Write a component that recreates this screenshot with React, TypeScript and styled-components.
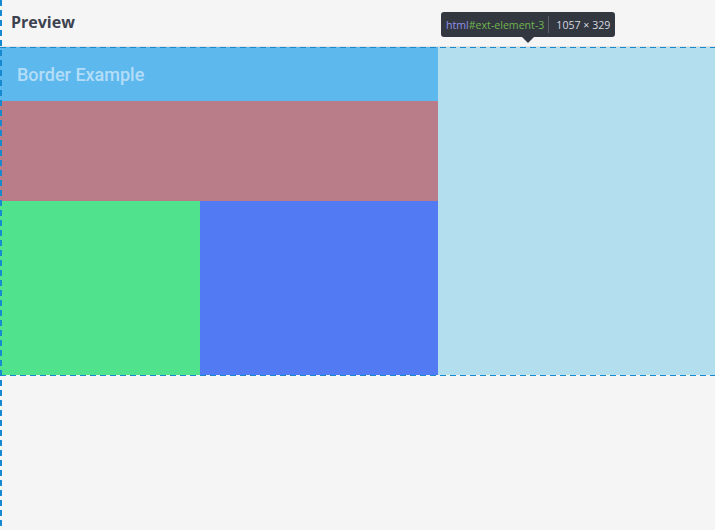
import React from "react";
import styled, { createGlobalStyle } from "styled-components";

const Global = createGlobalStyle`
  html, body { margin: 0; padding: 0; background: #f5f5f5; }
  body { font-family: Roboto, "Open Sans", "Liberation Sans", sans-serif; overflow: hidden; }
`;

const Page = styled.div`
  position: relative;
  width: 715px;
  height: 530px;
  overflow: hidden;
  background: #f5f5f5;
`;

const Header = styled.div`
  height: 47px;
  box-sizing: border-box;
  border-bottom: 1px solid #e2e2e2;
  display: flex;
  align-items: center;
  padding: 0 0 3px 11px;
  font-family: "Open Sans", "Liberation Sans", sans-serif;
  font-weight: 700;
  font-size: 16px;
  color: #3d4250;
`;

const Stage = styled.div`
  display: flex;
  width: 1057px;
  height: 329px;
  box-sizing: border-box;
  padding-bottom: 1px;
`;

const LeftCol = styled.div`
  width: 438px;
  display: flex;
  flex-direction: column;
`;

const TitleBar = styled.div`
  height: 54px;
  background: #5db8ee;
  display: flex;
  align-items: center;
  padding: 1px 0 0 17px;
  box-sizing: border-box;
  font-family: Roboto, "Liberation Sans", sans-serif;
  font-weight: 500;
  font-size: 18px;
  color: rgba(255, 255, 255, 0.55);
`;

const Block = styled.div<{ $bg: string; $h?: number; $w?: number }>`
  background: ${(p) => p.$bg};
  ${(p) => (p.$h ? `height: ${p.$h}px; flex: none;` : "")}
  ${(p) => (p.$w ? `width: ${p.$w}px; flex: none;` : "")}
  ${(p) => (!p.$h && !p.$w ? "flex: 1;" : "")}
`;

const Row = styled.div`
  display: flex;
  flex: 1;
`;

const RightPanel = styled.div`
  flex: 1;
  background: #b3deed;
`;

const HDash = styled.div<{ $top: number }>`
  position: absolute;
  left: 0;
  right: 0;
  top: ${(p) => p.$top}px;
  height: 1px;
  background: repeating-linear-gradient(to right, #1789cf 0 6px, transparent 6px 10px);
`;

const VDash = styled.div`
  position: absolute;
  left: 0;
  top: 0;
  bottom: 0;
  width: 2px;
  background: repeating-linear-gradient(to bottom, #1789cf 0 6px, transparent 6px 10px);
`;

const Tooltip = styled.div`
  position: absolute;
  left: 441px;
  top: 12px;
  width: 174px;
  height: 25px;
  padding: 0 0 0 5px;
  box-sizing: border-box;
  background: #333740;
  border-radius: 3px;
  display: flex;
  align-items: center;
  font-family: "Open Sans", "Liberation Sans", sans-serif;
  font-size: 10.6px;
  white-space: nowrap;
  &::after {
    content: "";
    position: absolute;
    left: 81px;
    bottom: -6px;
    border-left: 6px solid transparent;
    border-right: 6px solid transparent;
    border-top: 6px solid #333740;
  }
`;

const Tag = styled.span`
  color: #8f8fe6;
`;

const Id = styled.span`
  color: #6fb54f;
`;

const Divider = styled.span`
  width: 1px;
  height: 17px;
  background: #5b606b;
  margin: 0 7px 0 4px;
`;

const Size = styled.span`
  color: #d6dae0;
`;

export default function App() {
  return (
    <Page>
      <Global />
      <Header>Preview</Header>
      <Stage>
        <LeftCol>
          <TitleBar>Border Example</TitleBar>
          <Block $bg="#b97c89" $h={100} />
          <Row>
            <Block $bg="#50e28c" $w={200} />
            <Block $bg="#527af3" />
          </Row>
        </LeftCol>
        <RightPanel />
      </Stage>
      <HDash $top={47} />
      <HDash $top={375} />
      <VDash />
      <Tooltip>
        <Tag>html</Tag>
        <Id>#ext-element-3</Id>
        <Divider />
        <Size>1057 × 329</Size>
      </Tooltip>
    </Page>
  );
}
